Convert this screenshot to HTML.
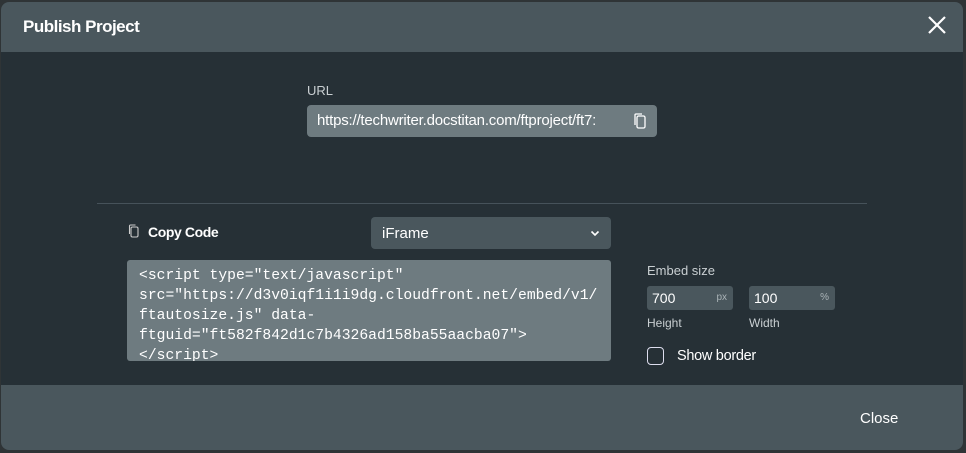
<!DOCTYPE html>
<html><head><style>
*{margin:0;padding:0;box-sizing:border-box}
body{width:966px;height:453px;background:#2f3436;font-family:"Liberation Sans",sans-serif;position:relative;overflow:hidden}
.dlg{position:absolute;left:1px;top:2px;width:962px;height:448px;border-radius:8px;overflow:hidden;background:#263036}
.hdr{position:absolute;left:0;top:0;width:100%;height:50px;background:#4a575d}
.hdr h1{position:absolute;left:22px;top:15px;font-size:17px;color:#fff;font-weight:bold;letter-spacing:-0.5px}
.x{position:absolute;right:16px;top:13px}
.ftr{position:absolute;left:0;top:383px;width:100%;height:65px;background:#4a575d}
.ftr span{position:absolute;left:859px;top:25px;color:#fff;font-size:15px}
.lbl{position:absolute;color:#c9cfd2;font-size:13px}
.url{position:absolute;left:306px;top:103px;width:350px;height:32px;background:#6e7b80;border-radius:4px;color:#fff;font-size:15px;padding:7px 0 0 10px;white-space:nowrap;overflow:hidden;letter-spacing:-0.2px}
.hr{position:absolute;left:96px;top:201px;width:770px;height:1px;background:#46525a}
.sel{position:absolute;left:370px;top:215px;width:240px;height:32px;background:#4a575d;border-radius:4px;color:#fff;font-size:15px;padding:8px 0 0 11px}
.code{position:absolute;left:126px;top:258px;width:484px;height:101px;background:#6e7b80;border-radius:3px;color:#fff;font-family:"Liberation Mono",monospace;font-size:14.7px;line-height:20px;padding:6px 0 0 12px;white-space:pre;overflow:hidden}
.inp{position:absolute;top:284px;height:24px;background:#4a575d;border-radius:3px;color:#fff;font-size:14px;padding:4px 0 0 5px}
.inp i{position:absolute;right:6px;top:6px;font-style:normal;font-size:10px;color:#aab3b7}
</style></head><body>
<div class="dlg">
<div class="hdr"><h1>Publish Project</h1>
<svg class="x" width="20" height="20" viewBox="0 0 20 20"><path d="M2 2L18 18M18 2L2 18" stroke="#fff" stroke-width="2.2"/></svg></div>
<div class="lbl" style="left:306px;top:81px">URL</div>
<div class="url">https://techwriter.docstitan.com/ftproject/ft7:</div>
<div style="position:absolute;left:624px;top:107px;width:30px;height:24px;background:#6e7b80"></div>
<svg style="position:absolute;left:631px;top:110px" width="16" height="18" viewBox="0 0 16 18"><rect x="5" y="4" width="8" height="12" rx="1.5" fill="none" stroke="#fff" stroke-width="1.3"/><path d="M3 13V3a1 1 0 0 1 1-1h6" fill="none" stroke="#fff" stroke-width="1.3"/></svg>
<div class="hr"></div>
<svg style="position:absolute;left:127px;top:222px" width="12" height="14" viewBox="0 0 12 14"><rect x="3" y="3" width="7" height="10" rx="1.5" fill="none" stroke="#ccc" stroke-width="1.1"/><path d="M1.5 10V2a1 1 0 0 1 1-1h5" fill="none" stroke="#ccc" stroke-width="1.1"/></svg>
<div style="position:absolute;left:147px;top:222px;color:#fff;font-weight:bold;font-size:14px;letter-spacing:-0.4px">Copy Code</div>
<div class="sel">iFrame<svg style="position:absolute;right:11px;top:13px" width="10" height="7" viewBox="0 0 10 7"><path d="M1.5 1.5L5 5L8.5 1.5" fill="none" stroke="#fff" stroke-width="1.6"/></svg></div>
<div class="code">&lt;script type="text/javascript"
src="https://d3v0iqf1i1i9dg.cloudfront.net/embed/v1/
ftautosize.js" data-
ftguid="ft582f842d1c7b4326ad158ba55aacba07"&gt;
&lt;/script&gt;</div>
<div class="lbl" style="left:646px;top:261px">Embed size</div>
<div class="inp" style="left:646px;width:86px">700<i>px</i></div>
<div class="inp" style="left:748px;width:86px">100<i>%</i></div>
<div class="lbl" style="left:646px;top:314px;font-size:12px">Height</div>
<div class="lbl" style="left:748px;top:314px;font-size:12px">Width</div>
<div style="position:absolute;left:646px;top:345px;width:17px;height:18px;border:1.5px solid #dde;border-radius:4px"></div>
<div style="position:absolute;left:676px;top:346px;color:#fff;font-size:14.5px;letter-spacing:-0.3px">Show border</div>
<div class="ftr"><span>Close</span></div>
</div>
</body></html>
